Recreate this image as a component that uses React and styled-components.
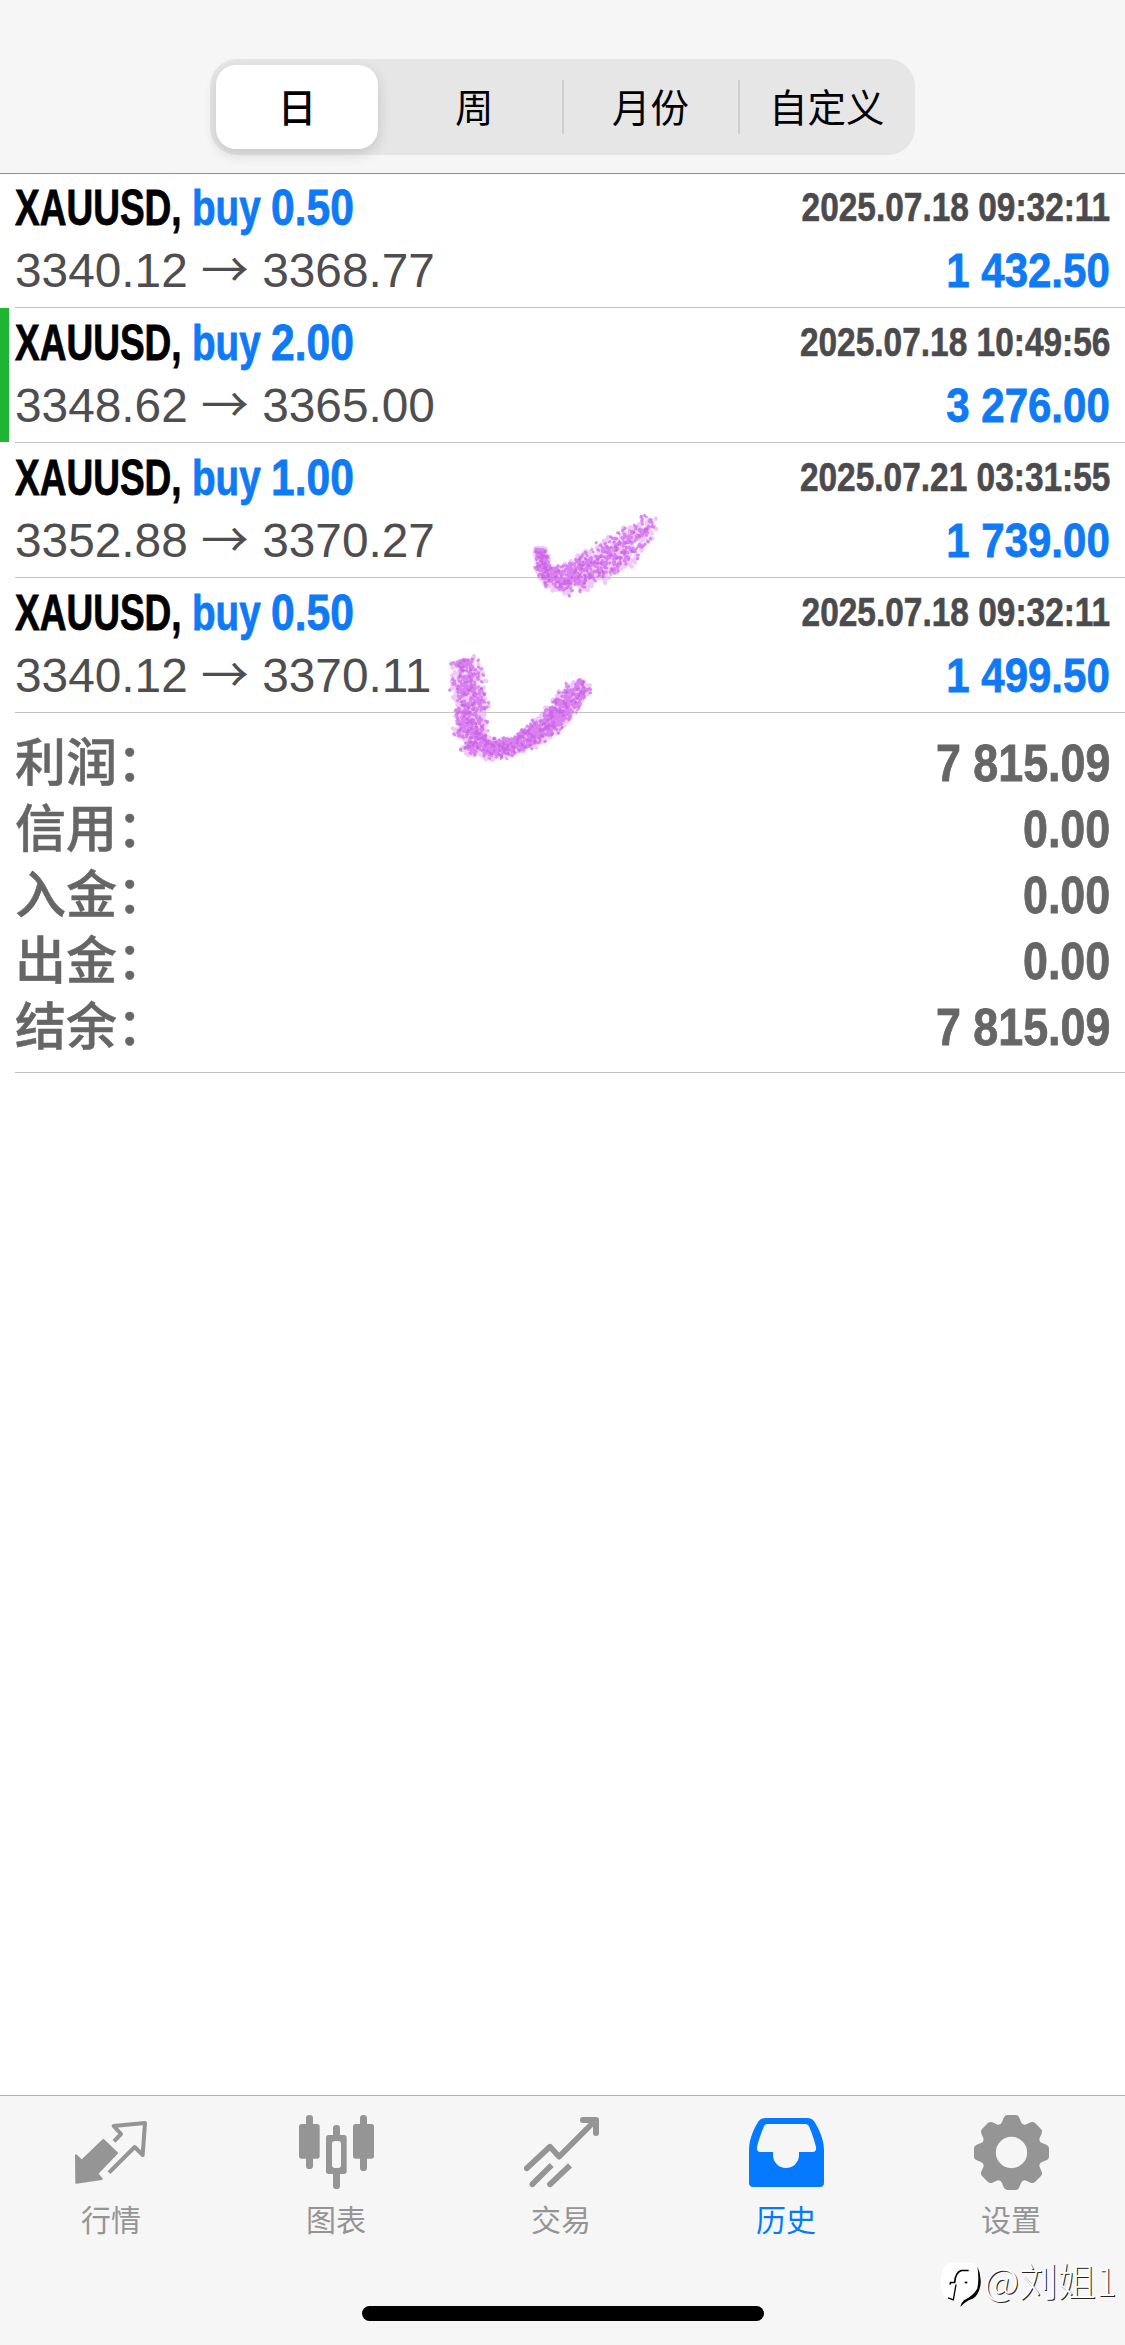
import React, { useState } from 'react';
import styled, { createGlobalStyle } from 'styled-components';

const deals = [
  { id: 1, symbol: 'XAUUSD', volume: '0.50', open: '3340.12', close: '3368.77', time: '2025.07.18 09:32:11', profit: '1 432.50' },
  { id: 2, symbol: 'XAUUSD', volume: '2.00', open: '3348.62', close: '3365.00', time: '2025.07.18 10:49:56', profit: '3 276.00', marked: true },
  { id: 3, symbol: 'XAUUSD', volume: '1.00', open: '3352.88', close: '3370.27', time: '2025.07.21 03:31:55', profit: '1 739.00' },
  { id: 4, symbol: 'XAUUSD', volume: '0.50', open: '3340.12', close: '3370.11', time: '2025.07.18 09:32:11', profit: '1 499.50' },
];

const totals = [
  { label: '利润', value: '7 815.09' },
  { label: '信用', value: '0.00' },
  { label: '入金', value: '0.00' },
  { label: '出金', value: '0.00' },
  { label: '结余', value: '7 815.09' },
];

const periods = ['日', '周', '月份', '自定义'];

const QuotesIcon = () => (
  <svg viewBox="0 0 225 225" fill="none" stroke="currentColor">
    <path
      d="M6 121 L23 137 L88 75 L129 114 L70 176 L83 192 L7 203 Z"
      fill="currentColor"
      strokeWidth="6"
      strokeLinejoin="round"
    />
    <path d="M120 79 L141 57 L119 33 L213 24 L206 120 L182 96 L105 173" strokeWidth="12" strokeLinejoin="round" />
  </svg>
);

const ChartIcon = () => (
  <svg viewBox="0 0 225 225" fill="currentColor">
    <rect x="0" y="27" width="62" height="104" rx="8" />
    <rect x="21" y="0" width="21" height="162" rx="10" />
    <rect x="162" y="27" width="63" height="104" rx="8" />
    <rect x="183" y="0" width="21" height="168" rx="10" />
    <rect x="102" y="30" width="21" height="192" rx="10" />
    <rect x="81" y="60" width="62" height="117" rx="8" />
    <rect x="99" y="78" width="27" height="81" rx="9" fill="#f6f6f6" />
  </svg>
);

const TradeIcon = () => (
  <svg viewBox="0 0 225 225" fill="none" stroke="currentColor" strokeWidth="17">
    <path d="M8 160 L78 95 L105 125 L213 17" strokeLinecap="round" strokeLinejoin="round" />
    <path d="M177 15 H216 V54" strokeWidth="18" strokeLinecap="round" strokeLinejoin="round" />
    <path d="M25 208 L83 150 M78 208 L138 151" />
    <circle cx="25" cy="208" r="8.5" fill="currentColor" stroke="none" />
    <circle cx="78" cy="208" r="8.5" fill="currentColor" stroke="none" />
  </svg>
);

const HistoryIcon = () => (
  <svg viewBox="0 0 225 225" fill="currentColor" fillRule="evenodd">
    <path d="M0 105 C0 70 18 35 29 18 Q36 9 50 9 H174 Q188 9 195 18 C206 35 225 70 225 105 V203 Q225 216 212 216 H13 Q0 216 0 203 Z M56 27 Q47 27 44 36 C35 58 29 76 24 96 Q22 111 34 111 H72 V120 A39 39 0 0 0 150 120 V111 H191 Q203 111 201 96 C196 76 190 58 181 36 Q178 27 168 27 Z" />
  </svg>
);

const SettingsIcon = () => (
  <svg viewBox="0 0 225 225" fill="currentColor">
    <circle cx="112.5" cy="112.5" r="67" fill="none" stroke="currentColor" strokeWidth="40" />
    {[0, 45, 90, 135, 180, 225, 270, 315].map((a) => (
      <path
        key={a}
        transform={`rotate(${a} 112.5 112.5)`}
        d="M100 0 H125 Q133 0 136 8 L141 21 Q144 29 152 31 L140 50 H85 L73 31 Q81 29 84 21 L89 8 Q92 0 100 0 Z"
      />
    ))}
  </svg>
);

const tabs = [
  { label: '行情', Icon: QuotesIcon },
  { label: '图表', Icon: ChartIcon },
  { label: '交易', Icon: TradeIcon },
  { label: '历史', Icon: HistoryIcon },
  { label: '设置', Icon: SettingsIcon },
];

// [x, y, width, density] along each crayon stroke
const firstTick = [
  [541, 549, 12, 1.7],
  [543, 571, 14, 1.7],
  [554, 580, 23, 0.9],
  [572, 579, 32, 0.65],
  [592, 567, 37, 0.6],
  [616, 553, 35, 0.5],
  [632, 544, 34, 0.36],
  [642, 532, 26, 0.32],
  [650, 517, 15, 0.32],
];

const secondTick = [
  [463, 660, 25, 0.55],
  [469, 683, 33, 0.65],
  [472, 713, 34, 0.65],
  [470, 738, 33, 0.7],
  [482, 748, 23, 0.85],
  [500, 749, 18, 1.3],
  [519, 743, 20, 1.3],
  [539, 732, 22, 1.3],
  [557, 716, 25, 0.95],
  [571, 698, 26, 0.85],
  [585, 684, 17, 0.75],
];

// scatters short round dabs around the line so it reads as crayon grain
const scatter = (points, seed, amount) => {
  let s = seed;
  const rnd = () => {
    s = (s * 16807) % 2147483647;
    return s / 2147483647;
  };
  let d = '';
  for (let i = 0; i < points.length - 1; i++) {
    const [x1, y1, w1, n1] = points[i];
    const [x2, y2, w2, n2] = points[i + 1];
    const len = Math.hypot(x2 - x1, y2 - y1);
    const count = Math.round((len * (w1 + w2) * (n1 + n2) * amount) / 4);
    for (let k = 0; k < count; k++) {
      const t = rnd();
      const w = w1 + (w2 - w1) * t;
      const off = ((rnd() + rnd() * 0.5) / 1.5 - 0.5) * w * 1.1;
      const nx = -(y2 - y1) / len;
      const ny = (x2 - x1) / len;
      const x = x1 + (x2 - x1) * t + nx * off + (rnd() - 0.5) * 4;
      const y = y1 + (y2 - y1) * t + ny * off + (rnd() - 0.5) * 4;
      d += `M${x.toFixed(1)} ${y.toFixed(1)}l${(rnd() * 2 - 1).toFixed(1)} ${(rnd() * 2 - 1).toFixed(1)}`;
    }
  }
  return d;
};

const Crayon = () => (
  <CrayonLayer viewBox="0 0 1125 800">
    {[firstTick, secondTick].map((points, i) => (
      <g key={i} fill="none" strokeLinecap="round">
        <path d={scatter(points, 7100 + i * 97, 0.26)} stroke="#e29df3" strokeOpacity="0.55" strokeWidth="4.2" />
        <path d={scatter(points, 91300 + i * 97, 0.2)} stroke="#d163ee" strokeOpacity="0.7" strokeWidth="3" />
        <path d={scatter(points, 37700 + i * 97, 0.05)} stroke="#c052dc" strokeOpacity="0.5" strokeWidth="2.6" />
      </g>
    ))}
  </CrayonLayer>
);

const App = () => {
  const [period, setPeriod] = useState('日');
  const [tab, setTab] = useState('历史');

  return (
    <Screen>
      <GlobalStyle />
      <Header>
        <Segments>
          {periods.map((p, i) => (
            <Segment key={p} $active={p === period} $divider={i > 1} onClick={() => setPeriod(p)}>
              {p}
            </Segment>
          ))}
        </Segments>
      </Header>

      <Content>
        {deals.map((deal) => (
          <Deal key={deal.id} $marked={deal.marked}>
            <DealLine>
              <DealTitle>
                <Narrow $width={177} $scale={0.748}>{deal.symbol},</Narrow>
                <Narrow $width={79} $scale={0.78} $blue>buy</Narrow>
                <Narrow $width={82} $scale={0.86} $blue>{deal.volume}</Narrow>
              </DealTitle>
              <DealTime>{deal.time}</DealTime>
            </DealLine>
            <DealLine>
              <DealPrices>
                {deal.open} <Arrow>→</Arrow> {deal.close}
              </DealPrices>
              <DealProfit>{deal.profit}</DealProfit>
            </DealLine>
          </Deal>
        ))}
        <Totals>
          {totals.map((t) => (
            <TotalRow key={t.label}>
              <TotalLabel>{t.label}：</TotalLabel>
              <TotalValue>{t.value}</TotalValue>
            </TotalRow>
          ))}
        </Totals>
      </Content>
      <Crayon />

      <TabBar>
        {tabs.map(({ label, Icon }) => (
          <Tab key={label} $active={label === tab} onClick={() => setTab(label)}>
            <Icon />
            <span>{label}</span>
          </Tab>
        ))}
      </TabBar>
      <HomeIndicator />

      <Watermark>
        <svg viewBox="0 0 126 140" fill="none">
          <path d="M38 4 H84 Q122 6 122 58 Q122 98 100 112 Q76 120 64 132 L60 122 Q4 122 2 70 Q2 6 38 4 Z" fill="#fff" />
          <path d="M112 16 Q124 40 122 66 Q119 100 98 113 Q76 120 62 137 Q60 128 72 117 Q100 104 112 82 Q118 52 112 16 Z" fill="#000" />
          <path d="M30 70 L32 64 H44 Q46 34 64 28 H86" stroke="#000" strokeWidth="5" />
          <path d="M48 70 L40 116 L24 110" stroke="#000" strokeWidth="4" />
          <path d="M74 64 H82" stroke="#000" strokeWidth="5" />
        </svg>
        <span>@刘姐1</span>
      </Watermark>
    </Screen>
  );
};

const GlobalStyle = createGlobalStyle`
  * {
    box-sizing: border-box;
  }

  body {
    margin: 0;
    background-color: #fff;
    font-family: 'Liberation Sans', 'Noto Sans CJK SC', sans-serif;
  }
`;

const Screen = styled.div`
  position: relative;
  display: flex;
  flex-direction: column;
  width: 1125px;
  height: 2345px;
  overflow: hidden;
  background-color: #fff;
`;

const Header = styled.div`
  height: 174px;
  flex: none;
  padding-top: 59px;
  display: flex;
  justify-content: center;
  align-items: flex-start;
  background-color: #f6f6f6;
  border-bottom: 1px solid #8e8e8e;
`;

const Segments = styled.div`
  display: grid;
  grid-template-columns: repeat(4, 1fr);
  width: 705px;
  height: 96px;
  border-radius: 27px;
  background-color: #e6e6e7;
`;

const Segment = styled.button`
  position: relative;
  border: none;
  padding: 0 0 5px;
  margin: ${(props) => (props.$active ? '6px 8px 6px 6px' : '0')};
  border-radius: 20px;
  background-color: ${(props) => (props.$active ? '#fff' : 'transparent')};
  box-shadow: ${(props) => (props.$active ? '0 5px 14px rgba(0, 0, 0, 0.14)' : 'none')};
  font-family: 'Noto Sans CJK SC', sans-serif;
  font-size: 38.5px;
  font-weight: ${(props) => (props.$active ? 500 : 400)};
  color: #000;

  &::before {
    content: '';
    display: ${(props) => (props.$divider ? 'block' : 'none')};
    position: absolute;
    left: -1px;
    top: 21px;
    width: 2px;
    height: 54px;
    background-color: #cfcfd1;
  }
`;

const Content = styled.div`
  flex: 1;
  margin-top: -1px;
`;

const Deal = styled.div`
  position: relative;
  height: 135px;
  margin-left: 15px;
  padding: 3px 15px 0 0;
  border-bottom: 1px solid #c3c3c3;

  &::before {
    content: '';
    display: ${(props) => (props.$marked ? 'block' : 'none')};
    position: absolute;
    left: -15px;
    top: 0;
    width: 9px;
    height: 134px;
    background-color: #1db533;
  }
`;

const DealLine = styled.div`
  display: flex;
  justify-content: space-between;
  align-items: flex-start;
  height: 63px;
  line-height: 63px;
  white-space: nowrap;
`;

const DealTitle = styled.div`
  display: flex;
  font-size: 49.5px;
  font-weight: 700;
`;

const Narrow = styled.span`
  width: ${(props) => props.$width}px;
  color: ${(props) => (props.$blue ? '#0f7af5' : '#000')};
  transform: scaleX(${(props) => props.$scale});
  transform-origin: left;
  -webkit-text-stroke: 0.8px currentColor;
`;

const DealTime = styled.div`
  font-size: 40px;
  line-height: 62px;
  font-weight: 700;
  color: #4b4b4e;
  transform: scaleX(0.836);
  transform-origin: right;
  -webkit-text-stroke: 0.6px currentColor;
`;

const DealPrices = styled.div`
  font-size: 47.8px;
  color: #4e4e50;
`;

const Arrow = styled.span`
  font-family: 'Noto Sans CJK SC', sans-serif;
  line-height: 1;
`;

const DealProfit = styled.div`
  font-size: 49px;
  font-weight: 700;
  color: #0f7af5;
  transform: scaleX(0.857);
  transform-origin: right;
  -webkit-text-stroke: 0.8px currentColor;
`;

const Totals = styled.div`
  height: 360px;
  margin-left: 15px;
  padding: 17px 15px 0 0;
  border-bottom: 1px solid #c3c3c3;
`;

const TotalRow = styled.div`
  display: flex;
  justify-content: space-between;
  align-items: flex-start;
  height: 66px;
  line-height: 66px;
  color: #666;
`;

const TotalLabel = styled.div`
  font-family: 'Noto Sans CJK SC', sans-serif;
  font-size: 51px;
  line-height: 59px;
  font-weight: 500;
  -webkit-text-stroke: 0.5px currentColor;
`;

const TotalValue = styled.div`
  font-size: 52px;
  font-weight: 700;
  transform: scaleX(0.862);
  transform-origin: right;
  -webkit-text-stroke: 0.8px currentColor;
`;

const CrayonLayer = styled.svg`
  position: absolute;
  left: 0;
  top: 0;
  width: 1125px;
  height: 800px;
  pointer-events: none;
`;

const TabBar = styled.div`
  display: flex;
  flex: none;
  height: 250px;
  border-top: 1px solid #b0b0b0;
  background-color: #f6f6f6;
`;

const Tab = styled.div`
  flex: 1;
  display: flex;
  flex-direction: column;
  align-items: center;
  padding: 19px 3px 0 0;
  color: ${(props) => (props.$active ? '#057aff' : '#959595')};

  svg {
    width: 75px;
    height: 75px;
  }

  span {
    font-family: 'Noto Sans CJK SC', sans-serif;
    font-size: 30px;
    line-height: 40px;
    margin-top: 8px;
  }
`;

const HomeIndicator = styled.div`
  position: absolute;
  left: 362px;
  bottom: 24px;
  width: 402px;
  height: 15px;
  border-radius: 8px;
  background-color: #000;
`;

const Watermark = styled.div`
  position: absolute;
  left: 940px;
  top: 2261px;
  display: flex;
  align-items: flex-start;

  svg {
    width: 42px;
    height: 47px;
    margin-right: 2px;
  }

  span {
    font-family: 'Noto Sans CJK SC', sans-serif;
    font-size: 38.5px;
    font-weight: 300;
    line-height: 36px;
    color: #fff;
    white-space: nowrap;
    text-shadow: 1px 1px 0 #222;
  }
`;

export default App;
